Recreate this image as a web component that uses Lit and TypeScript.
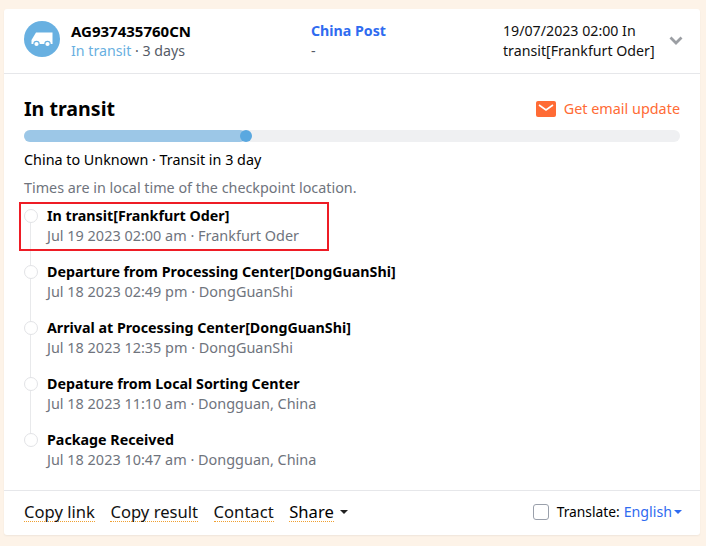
import { LitElement, html, css } from "lit";
import { customElement } from "lit/decorators.js";

const events = [
  ["In transit[Frankfurt Oder]", "Jul 19 2023 02:00 am · Frankfurt Oder"],
  ["Departure from Processing Center[DongGuanShi]", "Jul 18 2023 02:49 pm · DongGuanShi"],
  ["Arrival at Processing Center[DongGuanShi]", "Jul 18 2023 12:35 pm · DongGuanShi"],
  ["Depature from Local Sorting Center", "Jul 18 2023 11:10 am · Dongguan, China"],
  ["Package Received", "Jul 18 2023 10:47 am · Dongguan, China"],
];

@customElement("app-root")
export class AppRoot extends LitElement {
  static styles = css`
    :host { display: block; width: 706px; height: 546px; background: #fdf3e8; padding: 9px 6px 11px 4px; box-sizing: border-box;
      font-family: "Noto Sans", "Open Sans", sans-serif; font-size: 14.35px; line-height: 20px; color: #000; overflow: hidden; }
    .card { background: #fff; border-radius: 3px; height: 526px; display: flex; flex-direction: column; box-shadow: 0 1px 2px rgba(0,0,0,.06); }
    .head { height: 65px; flex: none; box-sizing: border-box; border-bottom: 1px solid #e6e7ea; display: grid; grid-template-columns: 36px 251px 192px 1fr; padding: 12px 0 0 20px; position: relative; }
    .truck { width: 36px; height: 36px; border-radius: 50%; background: #68b0e1; display: flex; align-items: center; justify-content: center; }
    .no { padding-left: 11px; font-size: 14.2px; }
    .no b { display: block; font-size: 15px; font-weight: 700; }
    .muted { color: #555b66; }
    .blue { color: #68b0e1; }
    .post b { color: #2f6bf0; font-weight: 700; display: block; font-size: 14.2px; }
    .latest { width: 172px; color: #111; font-size: 14.2px; }
    .chev { position: absolute; right: 17px; top: 27px; }
    .body { flex: 1; padding: 23px 20px 0; min-height: 0; }
    .title-row { display: flex; justify-content: space-between; align-items: center; height: 24px; }
    h2 { margin: 0; font-size: 19.6px; font-weight: 700; line-height: 24px; }
    .mail { display: flex; align-items: center; gap: 8px; color: #ff6b35; margin-top: -1px; font-size: 14.4px; }
    .track { height: 12px; border-radius: 6px; background: #eff0f2; margin-top: 9px; }
    .fill { height: 12px; width: 222px; border-radius: 6px; background: #9cc7e7; position: relative; }
    .fill::after { content: ""; position: absolute; right: -6px; top: 0; width: 12px; height: 12px; border-radius: 50%; background: #5aa8e0; }
    .route { margin-top: 8px; }
    .note { margin-top: 8px; color: #6f747d; }
    .list { margin-top: 8px; position: relative; }
    .ev { height: 56px; padding-left: 23px; position: relative; }
    .ev::before { content: ""; position: absolute; left: 0; top: 3px; width: 12px; height: 12px; border: 1px solid #e2e3e6; border-radius: 50%; background: #fff; z-index: 1; }
    .ev::after { content: ""; position: absolute; left: 6px; top: 16px; bottom: -4px; width: 1px; background: #e8e9eb; }
    .ev:last-child::after { display: none; }
    .ev b { display: block; font-weight: 700; font-size: 14.25px; }
    .ev span { color: #6f747d; font-size: 14.45px; }
    .mark { position: absolute; left: -5px; top: -4px; width: 310px; height: 49px; border: 2px solid #ee1c25; box-sizing: border-box; z-index: 2; }
    .foot { height: 45px; flex: none; box-sizing: border-box; border-top: 1px solid #e6e7ea; display: flex; align-items: center; padding: 0 18px 2px 20px; font-size: 16.6px; gap: 15.6px; }
    .foot a { color: #111; border-bottom: 1px dotted #f0a030; line-height: 18px; }
    .share { display: flex; align-items: center; gap: 6px; }
    .share span { border-bottom: 1px dotted #f0a030; line-height: 18px; }
    .caret { display: inline-block; border: 4px solid transparent; border-top: 4px solid #222; border-bottom: 0; }
    .tr { margin-left: auto; display: flex; align-items: center; font-size: 14.2px; }
    .lab { font-size: 13.8px; }
    .cb { width: 16px; height: 16px; box-sizing: border-box; border: 1px solid #9aa0ab; border-radius: 3px; margin-right: 8px; }
    .en { color: #2f6bf0; margin-left: 4px; }
    .tr .caret { border-top-color: #2f6bf0; margin-left: 2px; }
  `;

  render() {
    return html`<div class="card">
      <div class="head">
        <div class="truck"><svg width="22" height="15" viewBox="0 0 22 15"><path fill="#fff" d="M5 .5h16.500V12H.5V8z"/><circle cx="5.500" cy="12" r="3.200" fill="#68b0e1"/><circle cx="16.500" cy="12" r="3.200" fill="#68b0e1"/><circle cx="5.500" cy="12" r="2.100" fill="#fff"/><circle cx="16.500" cy="12" r="2.100" fill="#fff"/></svg></div>
        <div class="no"><b>AG937435760CN</b><span class="blue">In transit</span><span class="muted"> · 3 days</span></div>
        <div class="post"><b>China Post</b><span class="muted">-</span></div>
        <div class="latest">19/07/2023 02:00 In transit[Frankfurt Oder]</div>
        <svg class="chev" width="14" height="9" viewBox="0 0 14 9"><path d="M1.500 1.500 7 7l5.500-5.500" fill="none" stroke="#9b9ea3" stroke-width="2.800"/></svg>
      </div>
      <div class="body">
        <div class="title-row"><h2>In transit</h2>
          <div class="mail"><svg width="20" height="16" viewBox="0 0 20 16"><rect width="20" height="16" rx="2" fill="#ff6b35"/><path d="M3 4l7 5 7-5" fill="none" stroke="#fff" stroke-width="1.600"/></svg>Get email update</div></div>
        <div class="track"><div class="fill"></div></div>
        <div class="route">China to Unknown · Transit in 3 day</div>
        <div class="note">Times are in local time of the checkpoint location.</div>
        <div class="list">
          <div class="mark"></div>
          ${events.map((e) => html`<div class="ev"><b>${e[0]}</b><span>${e[1]}</span></div>`)}
        </div>
      </div>
      <div class="foot">
        <a>Copy link</a><a>Copy result</a><a>Contact</a><div class="share"><span>Share</span><i class="caret"></i></div>
        <div class="tr"><div class="cb"></div><span class="lab">Translate:</span><span class="en">English</span><i class="caret"></i></div>
      </div>
    </div>`;
  }
}
